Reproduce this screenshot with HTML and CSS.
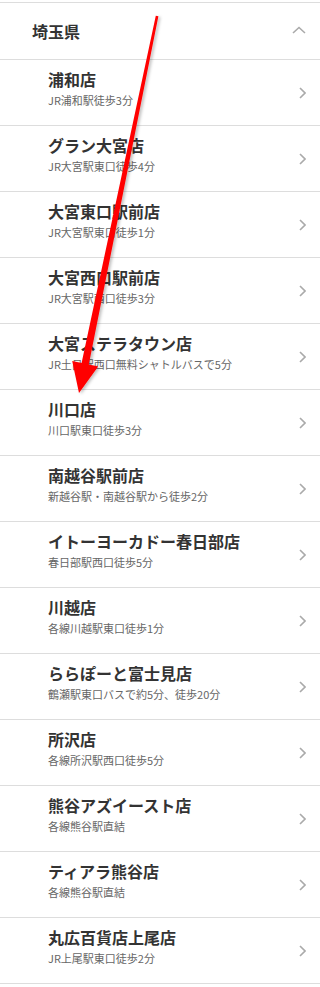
FILE: index.html
```html
<!DOCTYPE html>
<html lang="ja">
<head>
  <meta charset="UTF-8">
  <title>埼玉県 店舗一覧</title>
  <link rel="stylesheet" href="styles.css">
</head>
<body>
  <div class="shop-area">
    <div class="area-head">
      <span class="area-name">埼玉県</span>
      <svg class="chev-up" width="14" height="8" viewBox="0 0 14 8"><polyline points="1,7 7,1.5 13,7" fill="none" stroke="#aaa" stroke-width="1.6"/></svg>
    </div>
    <ul class="shop-list">
      <li class="shop"><div class="shop-info"><div class="shop-name">浦和店</div><div class="shop-access">JR浦和駅徒歩3分</div></div><svg class="chev" width="7" height="12" viewBox="0 0 7 12"><polyline points="1,1 6,6 1,11" fill="none" stroke="#aaa" stroke-width="1.6"/></svg></li>
      <li class="shop"><div class="shop-info"><div class="shop-name">グラン大宮店</div><div class="shop-access">JR大宮駅東口徒歩4分</div></div><svg class="chev" width="7" height="12" viewBox="0 0 7 12"><polyline points="1,1 6,6 1,11" fill="none" stroke="#aaa" stroke-width="1.6"/></svg></li>
      <li class="shop"><div class="shop-info"><div class="shop-name">大宮東口駅前店</div><div class="shop-access">JR大宮駅東口徒歩1分</div></div><svg class="chev" width="7" height="12" viewBox="0 0 7 12"><polyline points="1,1 6,6 1,11" fill="none" stroke="#aaa" stroke-width="1.6"/></svg></li>
      <li class="shop"><div class="shop-info"><div class="shop-name">大宮西口駅前店</div><div class="shop-access">JR大宮駅西口徒歩3分</div></div><svg class="chev" width="7" height="12" viewBox="0 0 7 12"><polyline points="1,1 6,6 1,11" fill="none" stroke="#aaa" stroke-width="1.6"/></svg></li>
      <li class="shop"><div class="shop-info"><div class="shop-name">大宮ステラタウン店</div><div class="shop-access">JR土呂駅西口無料シャトルバスで5分</div></div><svg class="chev" width="7" height="12" viewBox="0 0 7 12"><polyline points="1,1 6,6 1,11" fill="none" stroke="#aaa" stroke-width="1.6"/></svg></li>
      <li class="shop"><div class="shop-info"><div class="shop-name">川口店</div><div class="shop-access">川口駅東口徒歩3分</div></div><svg class="chev" width="7" height="12" viewBox="0 0 7 12"><polyline points="1,1 6,6 1,11" fill="none" stroke="#aaa" stroke-width="1.6"/></svg></li>
      <li class="shop"><div class="shop-info"><div class="shop-name">南越谷駅前店</div><div class="shop-access">新越谷駅・南越谷駅から徒歩2分</div></div><svg class="chev" width="7" height="12" viewBox="0 0 7 12"><polyline points="1,1 6,6 1,11" fill="none" stroke="#aaa" stroke-width="1.6"/></svg></li>
      <li class="shop"><div class="shop-info"><div class="shop-name">イトーヨーカドー春日部店</div><div class="shop-access">春日部駅西口徒歩5分</div></div><svg class="chev" width="7" height="12" viewBox="0 0 7 12"><polyline points="1,1 6,6 1,11" fill="none" stroke="#aaa" stroke-width="1.6"/></svg></li>
      <li class="shop"><div class="shop-info"><div class="shop-name">川越店</div><div class="shop-access">各線川越駅東口徒歩1分</div></div><svg class="chev" width="7" height="12" viewBox="0 0 7 12"><polyline points="1,1 6,6 1,11" fill="none" stroke="#aaa" stroke-width="1.6"/></svg></li>
      <li class="shop"><div class="shop-info"><div class="shop-name">ららぽーと富士見店</div><div class="shop-access">鶴瀬駅東口バスで約5分、徒歩20分</div></div><svg class="chev" width="7" height="12" viewBox="0 0 7 12"><polyline points="1,1 6,6 1,11" fill="none" stroke="#aaa" stroke-width="1.6"/></svg></li>
      <li class="shop"><div class="shop-info"><div class="shop-name">所沢店</div><div class="shop-access">各線所沢駅西口徒歩5分</div></div><svg class="chev" width="7" height="12" viewBox="0 0 7 12"><polyline points="1,1 6,6 1,11" fill="none" stroke="#aaa" stroke-width="1.6"/></svg></li>
      <li class="shop"><div class="shop-info"><div class="shop-name">熊谷アズイースト店</div><div class="shop-access">各線熊谷駅直結</div></div><svg class="chev" width="7" height="12" viewBox="0 0 7 12"><polyline points="1,1 6,6 1,11" fill="none" stroke="#aaa" stroke-width="1.6"/></svg></li>
      <li class="shop"><div class="shop-info"><div class="shop-name">ティアラ熊谷店</div><div class="shop-access">各線熊谷駅直結</div></div><svg class="chev" width="7" height="12" viewBox="0 0 7 12"><polyline points="1,1 6,6 1,11" fill="none" stroke="#aaa" stroke-width="1.6"/></svg></li>
      <li class="shop"><div class="shop-info"><div class="shop-name">丸広百貨店上尾店</div><div class="shop-access">JR上尾駅東口徒歩2分</div></div><svg class="chev" width="7" height="12" viewBox="0 0 7 12"><polyline points="1,1 6,6 1,11" fill="none" stroke="#aaa" stroke-width="1.6"/></svg></li>
    </ul>
  </div>
  <!-- annotation arrow drawn over the list -->
  <svg class="note-arrow" width="320" height="420" viewBox="0 0 320 420">
    <defs>
      <filter id="arrow-shadow" x="-20%" y="-5%" width="140%" height="110%">
        <feDropShadow dx="2" dy="1" stdDeviation="1.5" flood-color="#000" flood-opacity="0.25"/>
      </filter>
    </defs>
    <polygon filter="url(#arrow-shadow)" fill="#ff0000" points="155.8,15.8 158.4,16.2 88.8,364.6 98.2,366.4 79,393 72.2,361 81.6,362.9"/>
  </svg>
</body>
</html>
```

FILE: styles.css
```css
body {
  margin: 0;
  background: #fff;
  font-family: "Noto Sans CJK JP", "Noto Sans", Arial, sans-serif;
  color: #333;
}
.shop-area {
  margin-top: 2px;
  border-top: 1px solid #ddd;
}
.area-head {
  height: 56px;
  display: flex;
  align-items: center;
  justify-content: space-between;
  padding: 0 14px 0 32px;
  border-bottom: 1px solid #ddd;
}
.area-name {
  font-size: 16px;
  font-weight: bold;
  line-height: 20px;
  color: #333;
}
.chev-up {
  margin-top: -2px;
}
.shop-list {
  list-style: none;
  margin: 0;
  padding: 0;
}
.shop {
  height: 65px;
  box-sizing: content-box;
  display: flex;
  align-items: center;
  justify-content: space-between;
  padding: 0 14px 0 48px;
  border-bottom: 1px solid #ddd;
}
.shop-info {
  display: flex;
  flex-direction: column;
  padding-bottom: 8px;
}
.shop-name {
  font-size: 16px;
  font-weight: bold;
  line-height: 20px;
  color: #333;
}
.shop-access {
  font-size: 11px;
  line-height: 16px;
  margin-top: 3px;
  color: #666;
}
.chev {
  margin-top: 1px;
}
.note-arrow {
  position: absolute;
  left: 0;
  top: 0;
  pointer-events: none;
}
```
